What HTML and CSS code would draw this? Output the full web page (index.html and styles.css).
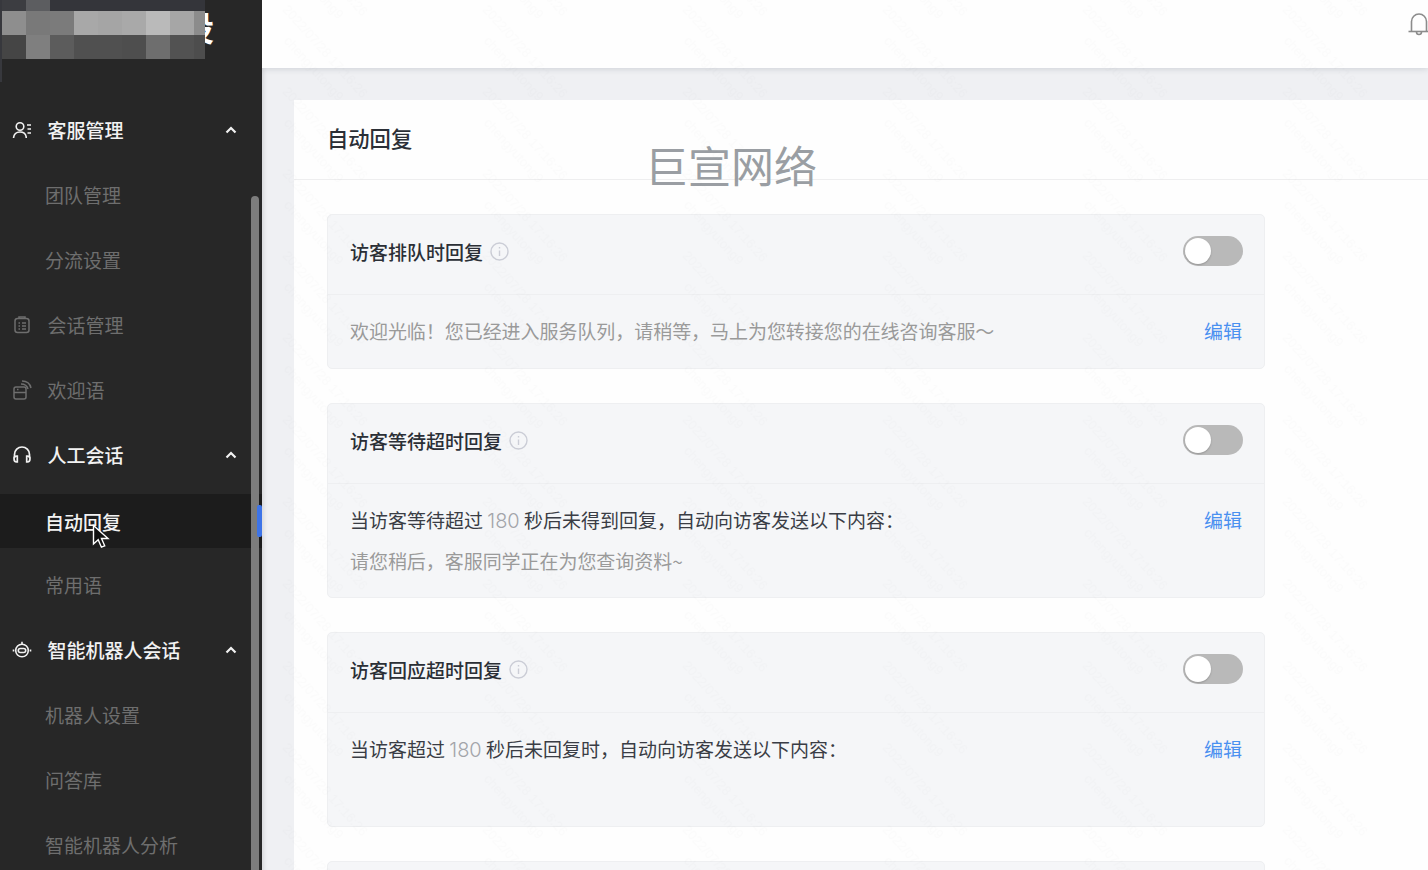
FILE: index.html
```html
<!DOCTYPE html>
<html lang="zh-CN">
<head>
<meta charset="utf-8">
<title>自动回复</title>
<link rel="stylesheet" href="styles.css">
</head>
<body>
<div class="app">
  <aside class="sidebar">
    <div class="logo">
      <span class="logo-text">设</span>
      <svg class="mosaic" width="205" height="82" viewBox="0 0 205 82" shape-rendering="crispEdges">
        <rect x="0" y="0" width="2" height="82" fill="#37383d"/>
        <rect x="2" y="0" width="24" height="11" fill="#3c3d41"/><rect x="26" y="0" width="24" height="11" fill="#5c5d60"/><rect x="50" y="0" width="155" height="11" fill="#34353a"/>
        <rect x="2" y="11" width="24" height="24" fill="#8e8e8e"/><rect x="26" y="11" width="24" height="24" fill="#797979"/><rect x="50" y="11" width="24" height="24" fill="#7b7b7b"/><rect x="74" y="11" width="24" height="24" fill="#a8a8a8"/><rect x="98" y="11" width="24" height="24" fill="#a5a5a5"/><rect x="122" y="11" width="24" height="24" fill="#a9a9a9"/><rect x="146" y="11" width="24" height="24" fill="#bababa"/><rect x="170" y="11" width="24" height="24" fill="#a6a6a6"/><rect x="194" y="11" width="11" height="24" fill="#8c8c8c"/>
        <rect x="2" y="35" width="24" height="24" fill="#454545"/><rect x="26" y="35" width="24" height="24" fill="#7f7f7f"/><rect x="50" y="35" width="24" height="24" fill="#5c5c5c"/><rect x="74" y="35" width="24" height="24" fill="#505050"/><rect x="98" y="35" width="24" height="24" fill="#505050"/><rect x="122" y="35" width="24" height="24" fill="#4e4e4e"/><rect x="146" y="35" width="24" height="24" fill="#6e6e6e"/><rect x="170" y="35" width="24" height="24" fill="#525252"/><rect x="194" y="35" width="11" height="24" fill="#4d4d4d"/>
      </svg>
    </div>
    <nav class="menu">
      <div class="item group">
        <svg class="ico" viewBox="0 0 20 20" fill="none" stroke="currentColor" stroke-width="1.600"><circle cx="8" cy="6.500" r="3.800"/><path d="M1.500 18c.4-3.900 3-6 6.500-6s5.600 1.700 6.200 4.800V18"/><path d="M15 5h4M15.500 9h3.500M15.500 13h3.500"/></svg>
        <span class="label">客服管理</span>
        <svg class="chev" viewBox="0 0 12 8" fill="none" stroke="currentColor" stroke-width="2.200"><path d="M1.500 6.500 6 2l4.500 4.500"/></svg>
      </div>
      <div class="item sub">团队管理</div>
      <div class="item sub">分流设置</div>
      <div class="item muted">
        <svg class="ico" viewBox="0 0 20 20" fill="none" stroke="currentColor" stroke-width="1.500"><rect x="3" y="3.500" width="14" height="14" rx="2.500"/><path d="M7 3.500V2h6v1.500M6.500 8h1.500M10 8h4M6.500 11h1.500M10 11h4M6.500 14h1.500M10 14h4"/></svg>
        <span class="label">会话管理</span>
      </div>
      <div class="item muted">
        <svg class="ico" viewBox="0 0 20 20" fill="none" stroke="currentColor" stroke-width="1.500"><rect x="2" y="7" width="12" height="12" rx="2"/><path d="M2 12.500h12M5 9.500h1.500M9 4c3.500 0 6 1.500 7 5M10 1c4.500 0 8 2.500 9 7"/></svg>
        <span class="label">欢迎语</span>
      </div>
      <div class="item group">
        <svg class="ico" viewBox="0 0 20 20" fill="none" stroke="currentColor" stroke-width="1.700"><path d="M2.500 13V9.500a7.500 7.500 0 0 1 15 0V13"/><path d="M2 13.500c0-1.500.8-2.500 2.500-2.500h.8v6h-.8C2.800 17 2 15.500 2 13.500zM18 13.500c0-1.500-.8-2.500-2.500-2.500h-.8v6h.8c1.700 0 2.500-1.500 2.500-3.500z"/></svg>
        <span class="label">人工会话</span>
        <svg class="chev" viewBox="0 0 12 8" fill="none" stroke="currentColor" stroke-width="2.200"><path d="M1.500 6.500 6 2l4.500 4.500"/></svg>
      </div>
      <div class="item sub active">自动回复</div>
      <div class="item sub">常用语</div>
      <div class="item group">
        <svg class="ico" viewBox="0 0 20 20" fill="none" stroke="currentColor" stroke-width="1.600"><circle cx="10" cy="10.500" r="6.300"/><rect x="6.300" y="8.500" width="7.400" height="4" rx="2"/><path d="M10 4.200V1.800M1.500 9.500v2M18.500 9.500v2"/></svg>
        <span class="label">智能机器人会话</span>
        <svg class="chev" viewBox="0 0 12 8" fill="none" stroke="currentColor" stroke-width="2.200"><path d="M1.500 6.500 6 2l4.500 4.500"/></svg>
      </div>
      <div class="item sub">机器人设置</div>
      <div class="item sub">问答库</div>
      <div class="item sub">智能机器人分析</div>
    </nav>
    <div class="thumb"></div>
    <div class="marker"></div>
    <svg class="cursor" width="18" height="26" viewBox="0 0 18 26"><path d="M1.500 1.500v18.500l4.700-4.300 3.200 7.500 3.300-1.400-3.200-7.300h6.500z" fill="#111" stroke="#fff" stroke-width="1.400"/></svg>
  </aside>
  <div class="main">
    <header class="topbar">
      <svg class="bell" viewBox="0 0 24 26" fill="none" stroke="#8c8c8c" stroke-width="1.600"><path d="M4.500 20V10.500a7.500 7.500 0 0 1 15 0V20"/><path d="M1.500 20.500h21"/><path d="M9.500 21a2.500 2.500 0 0 0 5 0"/></svg>
    </header>
    <section class="panel">
      <h1 class="panel-title">自动回复</h1>
      <div class="cards">
        <article class="card">
          <div class="card-head">
            <h2 class="card-title">访客排队时回复</h2>
            <svg class="info" viewBox="0 0 19 19" fill="none" stroke="#cbcdd6" stroke-width="1.400"><circle cx="9.500" cy="9.500" r="8.500"/><path d="M9.500 8.500v5.500M9.500 5v1.500"/></svg>
            <span class="toggle"><span class="knob"></span></span>
          </div>
          <div class="card-body">
            <div class="lines"><p class="line gray">欢迎光临！您已经进入服务队列，请稍等，马上为您转接您的在线咨询客服～</p></div>
            <a class="edit">编辑</a>
          </div>
        </article>
        <article class="card">
          <div class="card-head">
            <h2 class="card-title">访客等待超时回复</h2>
            <svg class="info" viewBox="0 0 19 19" fill="none" stroke="#cbcdd6" stroke-width="1.400"><circle cx="9.500" cy="9.500" r="8.500"/><path d="M9.500 8.500v5.500M9.500 5v1.500"/></svg>
            <span class="toggle"><span class="knob"></span></span>
          </div>
          <div class="card-body">
            <div class="lines">
              <p class="line">当访客等待超过 <span class="num">180</span> 秒后未得到回复，自动向访客发送以下内容：</p>
              <p class="line gray">请您稍后，客服同学正在为您查询资料~</p>
            </div>
            <a class="edit">编辑</a>
          </div>
        </article>
        <article class="card">
          <div class="card-head">
            <h2 class="card-title">访客回应超时回复</h2>
            <svg class="info" viewBox="0 0 19 19" fill="none" stroke="#cbcdd6" stroke-width="1.400"><circle cx="9.500" cy="9.500" r="8.500"/><path d="M9.500 8.500v5.500M9.500 5v1.500"/></svg>
            <span class="toggle"><span class="knob"></span></span>
          </div>
          <div class="card-body">
            <div class="lines">
              <p class="line">当访客超过 <span class="num">180</span> 秒后未回复时，自动向访客发送以下内容：</p>
              <p class="line gray"></p>
            </div>
            <a class="edit">编辑</a>
          </div>
        </article>
        <article class="card card-next"></article>
      </div>
    </section>
    <div class="brand">巨宣网络</div>
    <svg class="wm" width="1166" height="870">
      <defs>
        <pattern id="wmp" width="200" height="164" patternUnits="userSpaceOnUse">
          <g transform="translate(20 -72) rotate(48)"><text class="wmt" x="0" y="0">2022/07/28 17:16:26</text><text class="wmt" x="24" y="20">chengyutong9</text></g>
          <g transform="translate(20 10) rotate(48)"><text class="wmt" x="0" y="0">2022/07/28 17:16:26</text><text class="wmt" x="24" y="20">chengyutong9</text></g>
          <g transform="translate(20 92) rotate(48)"><text class="wmt" x="0" y="0">2022/07/28 17:16:26</text><text class="wmt" x="24" y="20">chengyutong9</text></g>
        </pattern>
      </defs>
      <rect width="1166" height="870" fill="url(#wmp)"/>
    </svg>
  </div>
</div>
</body>
</html>
```

FILE: styles.css
```css
* { box-sizing: border-box; }
html, body { margin: 0; height: 100%; overflow: hidden; }
body { font-family: "Noto Sans CJK SC", "Noto Sans", sans-serif; background: #eff0f3; }
h1, h2, p { margin: 0; font-weight: 400; }

.app { display: flex; width: 1428px; height: 870px; overflow: hidden; }

.sidebar { position: relative; flex: 0 0 262px; height: 870px; background: #272727; overflow: hidden; z-index: 2; }
.logo { position: relative; height: 97px; padding: 0 48px 0 0; display: flex; justify-content: flex-end; align-items: flex-start; }
.logo-text { font-size: 34px; line-height: 54px; font-weight: 700; color: #fff; }
.mosaic { position: absolute; left: 0; top: 0; }

.menu { display: flex; flex-direction: column; }
.item { display: flex; align-items: center; height: 65px; flex: 0 0 65px; font-size: 19px; color: #6e6e6e; }
.group { padding: 0 25px 0 12px; color: #f2f2f2; font-weight: 500; }
.muted { padding: 0 25px 0 12px; color: #6e6e6e; }
.sub { padding-left: 45px; }
.active { height: 54px; flex: 0 0 54px; margin: 7px 0 4px; background: #1c1c1c; color: #f2f2f2; font-weight: 500; }
.ico { width: 20px; height: 20px; flex: none; margin-right: 15.500px; }
.label { flex: 1; }
.chev { width: 12px; height: 8px; flex: none; }

.thumb { position: absolute; left: 251px; top: 196px; bottom: -10px; width: 8px; border-radius: 4px 4px 0 0; background: #7c7c7c; }
.marker { position: absolute; left: 257px; top: 505px; width: 5px; height: 32px; border-radius: 2px; background: #3d74e8; }
.cursor { position: absolute; left: 92px; top: 524px; }

.main { position: relative; flex: 1; min-width: 0; height: 870px; overflow: hidden; box-shadow: inset 6px 0 6px -6px rgba(0,0,0,.18); }
.topbar { height: 68px; background: #fefefe; box-shadow: 0 1px 6px rgba(40,50,70,.16); display: flex; justify-content: flex-end; padding-top: 11px; position: relative; }
.bell { width: 24px; height: 26px; margin-right: -3px; }

.panel { margin: 32px 0 0 32px; background: #fefefe; height: 780px; }
.panel-title { height: 80px; line-height: 75px; padding-left: 33px; font-size: 21.300px; font-weight: 500; color: #2b2f36; border-bottom: 1px solid #eeeeef; }
.cards { width: 938px; margin: 34px 0 0 33px; display: flex; flex-direction: column; gap: 34px; }
.card { flex: none; background: #f5f6f8; border: 1px solid #eeeff1; border-radius: 5px; }
.card-next { min-height: 100px; }
.card-head { height: 80px; display: flex; align-items: center; padding: 0 21px 6px 22px; border-bottom: 1px solid #eeeff1; }
.card-title { font-size: 19px; font-weight: 500; color: #2b2f36; }
.info { width: 19px; height: 19px; margin-left: 7px; }
.toggle { margin-left: auto; width: 60px; height: 30px; border-radius: 15px; background: #b9b9b9; padding: 2px; display: block; margin-top: -1px; }
.knob { display: block; width: 26px; height: 26px; border-radius: 50%; background: #fff; box-shadow: 0 1px 2px rgba(0,0,0,.2); }
.card-body { display: flex; min-height: 73px; padding: 15px 22px 16px 22px; }
.lines { flex: 1; }
.line { font-size: 19px; line-height: 41px; height: 41px; color: #3a3d45; }
.line.gray { color: #9a9a9a; letter-spacing: -.05px; }
.num { font-family: Inter, "Noto Sans", sans-serif; font-size: 20px; font-weight: 300; color: #a3a5aa; }
.edit { font-size: 19px; line-height: 41px; height: 41px; color: #4a90f0; }

.brand { position: absolute; left: 383px; top: 134px; font-size: 43px; line-height: 60px; font-weight: 400; color: #9a9ea3; }
.wm { position: absolute; left: 0; top: 0; pointer-events: none; }
.wmt { font-family: "Liberation Sans", sans-serif; font-size: 13px; fill: rgba(0,0,0,.012); }
```
